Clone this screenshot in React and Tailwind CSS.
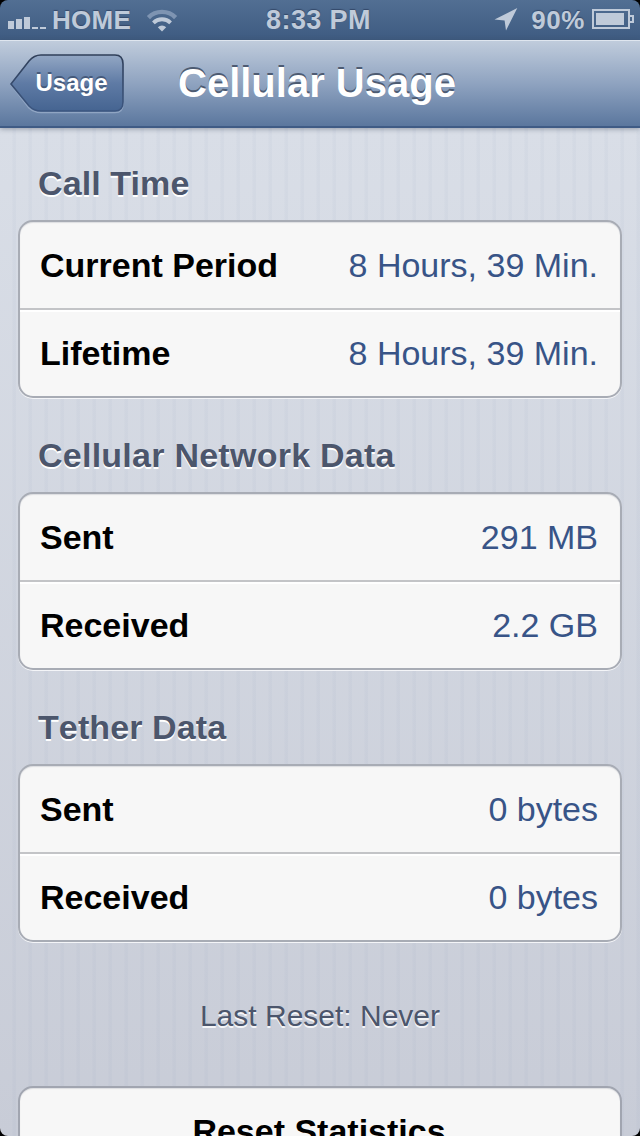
const groups = [
  {
    title: 'Call Time',
    titleClass: 'tracking-[0.1px]',
    rows: [
      { label: 'Current Period', value: '8 Hours, 39 Min.' },
      { label: 'Lifetime', value: '8 Hours, 39 Min.' },
    ],
  },
  {
    title: 'Cellular Network Data',
    titleClass: 'tracking-[0.25px]',
    rows: [
      { label: 'Sent', value: '291 MB' },
      { label: 'Received', value: '2.2 GB' },
    ],
  },
  {
    title: 'Tether Data',
    titleClass: 'tracking-[0.1px] [font-kerning:none]',
    rows: [
      { label: 'Sent', value: '0 bytes' },
      { label: 'Received', value: '0 bytes' },
    ],
  },
]

function SignalIcon() {
  return (
    <svg width="38" height="14" viewBox="0 0 38 14" fill="#bfcad9" className="mt-[5px] block">
      <rect x="0" y="5" width="6" height="8" />
      <rect x="8" y="3" width="6" height="10" />
      <rect x="16" y="1" width="6" height="12" />
      <rect x="24" y="11" width="6" height="2" />
      <rect x="32" y="11" width="6" height="2" />
    </svg>
  )
}

function WifiIcon() {
  return (
    <svg width="32" height="24" viewBox="0 0 32 24" fill="none" className="-mt-[1px] block">
      <path d="M2.4 9.6A19 19 0 0 1 29.6 9.6" stroke="#7e94b2" strokeWidth="4.4" />
      <path d="M7.4 14.8A12.2 12.2 0 0 1 24.6 14.8" stroke="#bfcad9" strokeWidth="3.8" />
      <path d="M11.8 19.2A6 6 0 0 1 20.2 19.2L16 23.4Z" fill="#bfcad9" />
    </svg>
  )
}

function LocationIcon() {
  return (
    <svg width="24" height="24" viewBox="0 0 24 24" className="-mt-[2px] block">
      <path d="M23.3 1 12 23.5 10.6 13.6 0.5 12.6Z" fill="#bfcad9" />
    </svg>
  )
}

function BatteryIcon() {
  return (
    <svg width="42" height="21" viewBox="0 0 42 21" fill="none" className="-mt-[1px] block">
      <rect x="1" y="1" width="36" height="18" stroke="#bfcad9" strokeWidth="2" />
      <rect x="4" y="4" width="28" height="12" fill="#bfcad9" />
      <path d="M38 7h3v6h-3" stroke="#bfcad9" strokeWidth="2" />
    </svg>
  )
}

function StatusBar() {
  return (
    <div className="flex h-10 items-center bg-linear-to-b from-[#526f93] to-[#3e5b81] pr-[6px] pl-2 text-[26px] leading-10 font-bold text-[#bfcad9] [text-shadow:0_-1px_1px_#34496a]">
      <div className="flex flex-1 items-center">
        <SignalIcon />
        <span className="ml-[6px] tracking-[0.3px]">HOME</span>
        <div className="ml-[15px]">
          <WifiIcon />
        </div>
      </div>
      <span className="mr-[5px] text-[27px] tracking-[0.4px]">8:33 PM</span>
      <div className="flex flex-1 items-center justify-end">
        <LocationIcon />
        <span className="mr-[7px] ml-[13px] tracking-[0.6px]">90%</span>
        <BatteryIcon />
      </div>
    </div>
  )
}

function BackButton() {
  return (
    <button className="relative h-[60px] w-[116px]">
      <svg width="116" height="60" viewBox="0 0 116 60" className="absolute inset-0">
        <defs>
          <linearGradient id="back" x1="0" y1="0" x2="0" y2="1">
            <stop offset="0" stopColor="#93a7c4" />
            <stop offset="0.5" stopColor="#5f7ba5" />
            <stop offset="1" stopColor="#456491" />
          </linearGradient>
          <linearGradient id="backEdge" x1="0" y1="0" x2="0" y2="1">
            <stop offset="0" stopColor="#303f59" />
            <stop offset="1" stopColor="#3c5680" />
          </linearGradient>
        </defs>
        <path d="M2 31 20 8Q25 2 32 2H106Q114 2 114 11V50Q114 58.5 106 58.5H32Q25 58.5 20 54Z" fill="none" stroke="#90a5c3" strokeWidth="1.5" />
        <path d="M2 30 20 7Q25 1 32 1H106Q114 1 114 10V48Q114 57 106 57H32Q25 57 20 52Z" fill="url(#back)" stroke="url(#backEdge)" strokeWidth="1.6" />
      </svg>
      <span className="relative -top-[1px] block pl-[9px] text-[24px] leading-[58px] font-bold text-white [text-shadow:0_-2px_0_#455a7b]">Usage</span>
    </button>
  )
}

function NavBar() {
  return (
    <header className="relative z-10 flex h-[88px] items-start border-t border-b-2 border-t-[#dfe6ef] border-b-[#3f5b85] bg-linear-to-b from-[#c0ccdc] via-[#8fa3c0] to-[#5b779e] pt-[13px] pl-[9px] shadow-[0_1px_5px_rgba(60,70,90,0.45)]">
      <BackButton />
      <h1 className="ml-[53px] text-[40px] leading-[58px] font-bold whitespace-nowrap text-white [text-shadow:0_-2px_0_#4d5b72]">
        Cellular Usage
      </h1>
    </header>
  )
}

function Row({ label, value, last }) {
  return (
    <div className={last ? 'flex h-[86px] items-center justify-between border-t-2 border-t-white pr-[22px] pb-[2px] pl-5' : 'flex h-[88px] items-center justify-between border-b-2 border-b-[#c3c4c7] pr-[22px] pl-5'}>
      <span className="text-black">{label}</span>
      <span className="font-normal text-[#385487]">{value}</span>
    </div>
  )
}

function Group({ title, titleClass, rows }) {
  return (
    <section>
      <h2 className="h-[94px] pt-[38px] pl-[38px] text-[34px] leading-[38px] font-bold text-[#4c566c] [text-shadow:0_2px_0_#ffffff]">
        <span className={titleClass}>{title}</span>
      </h2>
      <div className="mx-[18px] h-[178px] rounded-[15px] border-2 border-[#a8acb5] bg-[#f7f7f7] text-[34px] font-bold shadow-[0_1px_0_#f4f5f8,inset_0_1px_1px_#dcdde0]">
        {rows.map((r, i) => (
          <Row key={r.label} {...r} last={i === rows.length - 1} />
        ))}
      </div>
    </section>
  )
}

export default function App() {
  return (
    <div className="relative flex h-[1136px] w-[640px] flex-col overflow-hidden bg-[#c9cdd8] font-['Liberation_Sans',Arial,sans-serif]">
      <StatusBar />
      <NavBar />
      <main className="flex-1 overflow-hidden bg-[repeating-linear-gradient(90deg,transparent_0_12px,rgba(120,140,175,0.05)_13px_16px),linear-gradient(#d9dee7,#c8ccd7)]">
        <div className="-mt-[2px]">
          {groups.map(g => (
            <Group key={g.title} {...g} />
          ))}
        </div>
        <p className="mt-[56px] text-center text-[30px] leading-[36px] text-[#4c566c] [text-shadow:0_2px_0_#f4f5f8]">
          Last Reset: Never
        </p>
        <button className="mx-[18px] mt-[52px] block h-[92px] w-[604px] rounded-[15px] border-2 border-[#a1a5b0] bg-[#f7f7f7] pr-[2px] pb-[2px] text-[34px] font-bold text-black shadow-[inset_0_1px_1px_#dcdde0]">
          Reset Statistics
        </button>
      </main>

      {/* Rounded screen corners */}
      <div className="pointer-events-none absolute inset-0 z-20 rounded-[8px] shadow-[0_0_0_10px_#000]" />
    </div>
  )
}
